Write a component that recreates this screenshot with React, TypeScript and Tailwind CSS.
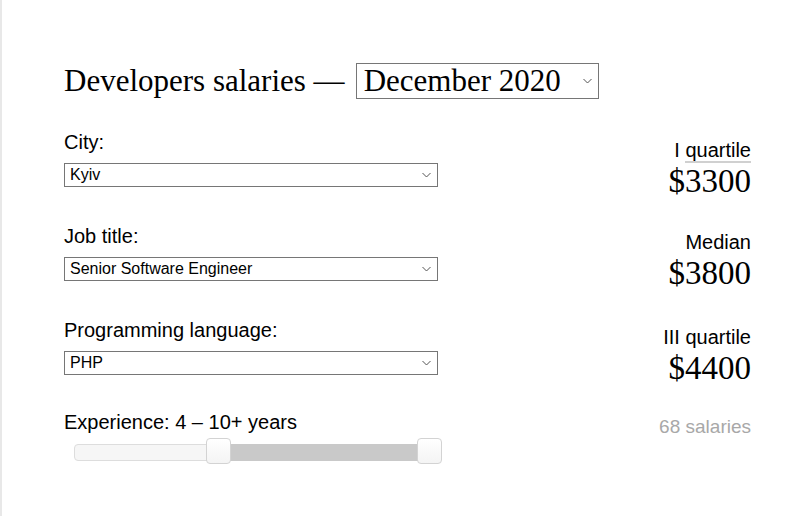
import React from 'react';

const Chevron = () => (
  <svg width="9" height="5" viewBox="0 0 9 5" className="absolute right-[6px] top-1/2 -translate-y-1/2 pointer-events-none">
    <path d="M0.5 0.5 L4.5 4.5 L8.5 0.5" fill="none" stroke="#555" strokeWidth="1" />
  </svg>
);

const Field = ({ label, value }: { label: string; value: string }) => (
  <div className="flex flex-col">
    <div className="text-[20px] leading-[23px] text-black font-['Liberation_Sans',Arial,sans-serif]">{label}</div>
    <div className="relative mt-[9px] h-[24px] w-[374px] border border-[#767676] bg-white">
      <div className="pl-[5px] text-[16px] leading-[22px] text-black font-['Liberation_Sans',Arial,sans-serif]">{value}</div>
      <Chevron />
    </div>
  </div>
);

const Stat = ({ label, value, underline }: { label: string; value: string; underline?: boolean }) => (
  <div className="flex flex-col items-end">
    <div className="text-[20px] leading-[23px] text-black font-['Liberation_Sans',Arial,sans-serif]">
      {underline ? (
        <>
          I <span className="border-b-2 border-[#d0d0d0]">quartile</span>
        </>
      ) : (
        label
      )}
    </div>
    <div className="mt-[2px] text-[33px] leading-[34px] text-black font-['Liberation_Serif','Times_New_Roman',serif]">{value}</div>
  </div>
);

export default function App() {
  return (
    <div className="min-h-[516px] w-[812px] border-l-2 border-[#e8e8e8] bg-white pl-[62px] pr-[61px] pt-[63px]">
      <div className="flex items-center">
        <span className="text-[31px] leading-[36px] text-black font-['Liberation_Serif','Times_New_Roman',serif]">
          Developers salaries —
        </span>
        <div className="relative ml-[11px] h-[36px] w-[243px] border border-[#767676] bg-white">
          <div className="pl-[7px] text-[31px] leading-[34px] text-black font-['Liberation_Serif','Times_New_Roman',serif]">
            December 2020
          </div>
          <Chevron />
        </div>
      </div>

      <div className="mt-[32px] flex justify-between">
        <div className="flex w-[380px] flex-col gap-[38px]">
          <Field label="City:" value="Kyiv" />
          <Field label="Job title:" value="Senior Software Engineer" />
          <Field label="Programming language:" value="PHP" />
          <div className="-mt-[2px] flex flex-col">
            <div className="text-[20px] leading-[23px] text-black font-['Liberation_Sans',Arial,sans-serif]">
              Experience: 4 – 10+ years
            </div>
            <div className="relative ml-[10px] mt-[10px] h-[17px] w-[367px] rounded-[4px] border border-[#dddddd] bg-[#f6f6f6]">
              <div className="absolute left-[143px] top-[-1px] h-[17px] w-[212px] bg-[#c9c9c9]" />
              <div className="absolute left-[131px] top-[-7px] h-[26px] w-[25px] rounded-[4px] border border-[#d3d3d3] bg-gradient-to-b from-white to-[#f4f4f4]" />
              <div className="absolute left-[342px] top-[-7px] h-[26px] w-[25px] rounded-[4px] border border-[#d3d3d3] bg-gradient-to-b from-white to-[#f4f4f4]" />
            </div>
          </div>
        </div>

        <div className="flex flex-col items-end pt-[8px]">
          <Stat label="I quartile" value="$3300" underline />
          <div className="mt-[33px]">
            <Stat label="Median" value="$3800" />
          </div>
          <div className="mt-[36px]">
            <Stat label="III quartile" value="$4400" />
          </div>
          <div className="mt-[30px] text-[19px] leading-[23px] text-[#a8a8a8] font-['Liberation_Sans',Arial,sans-serif]">
            68 salaries
          </div>
        </div>
      </div>
    </div>
  );
}
